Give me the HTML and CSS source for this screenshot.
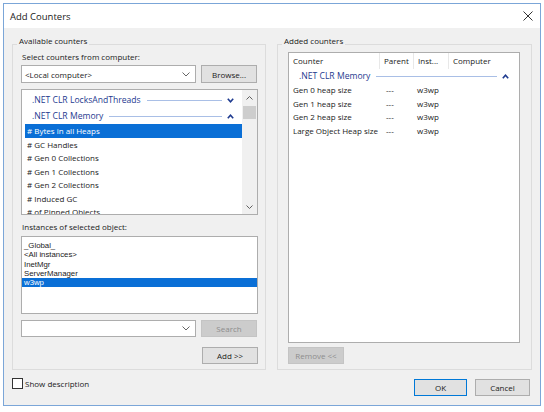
FILE: index.html
```html
<!DOCTYPE html>
<html>
<head>
<meta charset="utf-8">
<link rel="stylesheet" href="styles.css">
</head>
<body>
<div class="window">
  <div class="titlebar">
    <span class="title">Add Counters</span>
    <svg class="close" width="10" height="10" viewBox="0 0 10 10"><path d="M0.5 0.5 L9.5 9.5 M9.5 0.5 L0.5 9.5" stroke="#333" stroke-width="1" fill="none"/></svg>
  </div>
  <div class="body">
    <div class="groups">
      <div class="group left">
        <span class="group-title">Available counters</span>
        <div class="label">Select counters from computer:</div>
        <div class="row">
          <div class="combo"><span>&lt;Local computer&gt;</span><svg class="dd" width="8" height="5" viewBox="0 0 8 5"><path d="M0.5 0.5 L4 4 L7.5 0.5" stroke="#666" fill="none"/></svg></div>
          <div class="btn">Browse...</div>
        </div>
        <div class="listbox counters">
          <div class="list-content">
            <div class="cat"><span>.NET CLR LocksAndThreads</span><span class="line"></span><svg class="chev" width="7" height="5" viewBox="0 0 7 5"><path d="M0.8 0.8 L3.5 3.8 L6.2 0.8" stroke="#1e3a8f" stroke-width="1.6" fill="none"/></svg></div>
            <div class="cat"><span>.NET CLR Memory</span><span class="line"></span><svg class="chev" width="7" height="5" viewBox="0 0 7 5"><path d="M0.8 4.2 L3.5 1.2 L6.2 4.2" stroke="#1e3a8f" stroke-width="1.6" fill="none"/></svg></div>
            <div class="item sel"># Bytes in all Heaps</div>
            <div class="item"># GC Handles</div>
            <div class="item"># Gen 0 Collections</div>
            <div class="item"># Gen 1 Collections</div>
            <div class="item"># Gen 2 Collections</div>
            <div class="item"># Induced GC</div>
            <div class="item"># of Pinned Objects</div>
          </div>
          <div class="scrollbar">
            <div class="sb-btn"><svg width="7" height="4" viewBox="0 0 7 4"><path d="M0.5 3.5 L3.5 0.5 L6.5 3.5" stroke="#606060" fill="none"/></svg></div>
            <div class="thumb"></div>
            <div class="sb-space"></div>
            <div class="sb-btn"><svg width="7" height="4" viewBox="0 0 7 4"><path d="M0.5 0.5 L3.5 3.5 L6.5 0.5" stroke="#606060" fill="none"/></svg></div>
          </div>
        </div>
        <div class="label label2">Instances of selected object:</div>
        <div class="listbox instances">
          <div class="inst">_Global_</div>
          <div class="inst">&lt;All instances&gt;</div>
          <div class="inst">InetMgr</div>
          <div class="inst">ServerManager</div>
          <div class="inst sel">w3wp</div>
        </div>
        <div class="row row-search">
          <div class="combo"><span></span><svg class="dd" width="8" height="5" viewBox="0 0 8 5"><path d="M0.5 0.5 L4 4 L7.5 0.5" stroke="#666" fill="none"/></svg></div>
          <div class="btn disabled small">Search</div>
        </div>
        <div class="row row-add">
          <div class="btn small">Add &gt;&gt;</div>
        </div>
      </div>
      <div class="group right">
        <span class="group-title">Added counters</span>
        <div class="listbox added">
          <div class="grid head">
            <div class="c1">Counter</div>
            <div class="c2 sep">Parent</div>
            <div class="c3 sep">Inst...</div>
            <div class="c4 sep">Computer</div>
          </div>
          <div class="cat cat-added"><span>.NET CLR Memory</span><span class="line"></span><svg class="chev" width="7" height="5" viewBox="0 0 7 5"><path d="M0.8 4.2 L3.5 1.2 L6.2 4.2" stroke="#1e3a8f" stroke-width="1.6" fill="none"/></svg></div>
          <div class="grid data"><div class="c1">Gen 0 heap size</div><div class="c2">---</div><div class="c3">w3wp</div><div></div></div>
          <div class="grid data"><div class="c1">Gen 1 heap size</div><div class="c2">---</div><div class="c3">w3wp</div><div></div></div>
          <div class="grid data"><div class="c1">Gen 2 heap size</div><div class="c2">---</div><div class="c3">w3wp</div><div></div></div>
          <div class="grid data"><div class="c1">Large Object Heap size</div><div class="c2">---</div><div class="c3">w3wp</div><div></div></div>
        </div>
        <div class="row row-remove">
          <div class="btn disabled small">Remove &lt;&lt;</div>
        </div>
      </div>
    </div>
    <div class="footer">
      <div class="check"><span class="box"></span><span>Show description</span></div>
      <div class="spacer"></div>
      <div class="btn ok">OK</div>
      <div class="btn cancel">Cancel</div>
    </div>
  </div>
</div>
</body>
</html>
```
FILE: styles.css
```css
* { box-sizing: border-box; }
html, body { margin: 0; padding: 0; background: #ffffff; }
body {
  font-family: "Open Sans", "Liberation Sans", sans-serif;
  font-size: 8px;
  color: #1a1a1a;
}
.window {
  margin: 3px 0 0 3px;
  width: 538px;
  height: 403px;
  border: 1px solid #7ba6d8;
  background: #f0f0f0;
  display: flex;
  flex-direction: column;
}
.titlebar {
  flex: none;
  height: 24px;
  background: #ffffff;
  display: flex;
  align-items: center;
  justify-content: space-between;
  padding: 0 7px 0 6px;
}
.title { font-size: 9.5px; color: #1a1a1a; }
.close { display: block; }
.body {
  flex: 1;
  display: flex;
  flex-direction: column;
  padding: 16px 8px 0 8px;
}
.groups { display: flex; gap: 11px; }
.group {
  position: relative;
  height: 326px;
  border: 1px solid #dcdcdc;
  display: flex;
  flex-direction: column;
}
.group.left { width: 254px; padding: 6px 7px 5px 8px; }
.group.right { width: 255px; padding: 7px 11px 5px 10px; }
.group-title {
  position: absolute;
  top: -10px;
  left: 4px;
  padding: 0 2px;
  background: #f0f0f0;
  line-height: 12px;
}
.label { line-height: 12px; padding-left: 1px; flex: none; }
.label2 { margin-top: 6px; }
.row { display: flex; gap: 5px; margin-top: 2px; flex: none; }
.combo {
  width: 175px;
  height: 18px;
  background: #ffffff;
  border: 1px solid #adadad;
  display: flex;
  align-items: center;
  justify-content: space-between;
  padding: 0 5px 0 3px;
}
.dd { display: block; }
.btn {
  width: 56px;
  height: 18px;
  background: #e1e1e1;
  border: 1px solid #adadad;
  display: flex;
  align-items: center;
  justify-content: center;
}
.btn.small { height: 17px; }
.btn.disabled { background: #cccccc; border-color: #c4c4c4; color: #8c8c8c; }
.listbox { background: #ffffff; border: 1px solid #adadad; flex: none; }
.counters { margin-top: 6px; height: 126px; display: flex; }
.list-content { flex: 1; padding-top: 2px; overflow: hidden; }
.cat {
  height: 16px;
  display: flex;
  align-items: center;
  padding: 0 8px 0 10px;
  color: #1e3a8f;
  font-size: 8.6px;
}
.cat .line { flex: 1; height: 1px; background: #a9bfe6; margin: 1px 5px 0 6px; }
.chev { display: block; flex: none; }
.item { height: 13.5px; line-height: 13.5px; margin-left: 3px; padding-left: 2px; white-space: nowrap; }
.sel { background: #0a6fd6; color: #ffffff; }
.scrollbar { width: 15px; background: #f0f0f0; display: flex; flex-direction: column; align-items: center; flex: none; }
.sb-btn { height: 15px; width: 15px; display: flex; align-items: center; justify-content: center; }
.thumb { width: 13px; height: 13px; background: #cdcdcd; margin-top: 1px; }
.sb-space { flex: 1; }
.instances { margin-top: 3px; height: 78px; padding-top: 4px; }
.inst {
  height: 9.25px;
  line-height: 9.25px;
  padding-left: 2px;
  white-space: nowrap;
  font-family: "Liberation Sans", "Open Sans", sans-serif;
  font-size: 7.8px;
}
.row-search { margin-top: 6px; }
.row-search .combo { height: 17px; }
.row-add { margin-top: 10px; justify-content: flex-end; }
.added { height: 291px; }
.grid { display: grid; grid-template-columns: 90px 34px 35px 57px; }
.grid > div { padding-left: 4px; white-space: nowrap; }
.head { height: 16px; line-height: 16px; }
.head .sep { border-left: 1px solid #e8e8e8; }
.data { height: 13.5px; line-height: 13.5px; }
.data .c2 { padding-left: 7px; }
.cat-added { height: 14px; padding-right: 10px; }
.row-remove { margin-top: 4px; }
.footer { flex: 1; display: flex; align-items: flex-start; padding: 0 2px 0 0; }
.check { display: flex; align-items: center; gap: 2px; margin-top: 8px; line-height: 11px; }
.box { width: 11px; height: 11px; border: 1px solid #333333; background: #ffffff; }
.spacer { flex: 1; }
.footer .btn { height: 17px; margin-top: 9px; }
.ok { width: 53px; border-color: #0078d7; }
.cancel { width: 55px; margin-left: 8px; }
```
